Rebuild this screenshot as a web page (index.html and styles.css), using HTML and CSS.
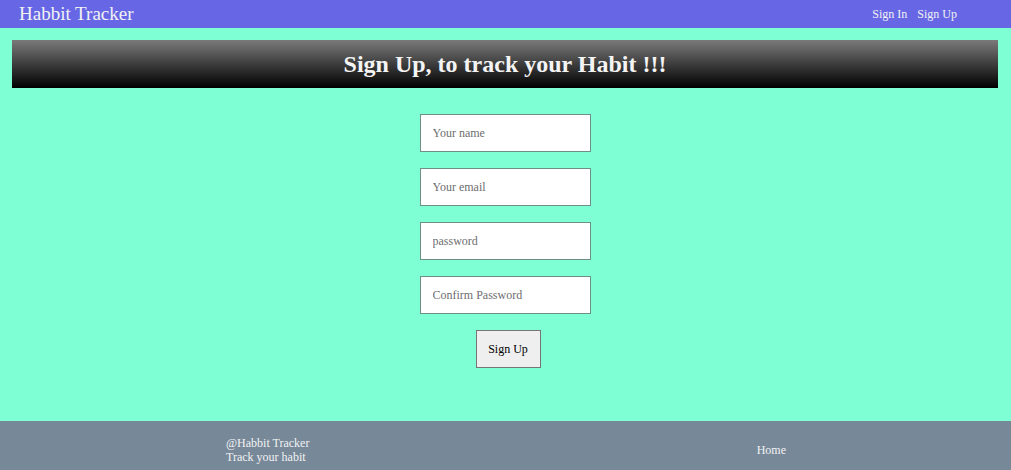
FILE: index.html
```html
<!DOCTYPE html>
<html>
<head>
<meta charset="utf-8">
<title>Habbit Tracker</title>
<link rel="stylesheet" href="styles.css">
</head>
<body>
<nav class="navbar">
  <a class="brand" href="#">Habbit Tracker</a>
  <div class="nav-links">
    <a href="#">Sign In</a>
    <a href="#">Sign Up</a>
  </div>
</nav>
<main class="main">
  <h1 class="banner">Sign Up, to track your Habit !!!</h1>
  <form class="form">
    <input class="field" type="text" placeholder="Your name">
    <input class="field" type="email" placeholder="Your email">
    <input class="field" type="password" placeholder="password">
    <input class="field" type="password" placeholder="Confirm Password">
    <button class="btn" type="button">Sign Up</button>
  </form>
</main>
<footer class="footer">
  <div class="foot-left">
    <div>@Habbit Tracker</div>
    <div>Track your habit</div>
  </div>
  <a class="foot-link" href="#">Home</a>
</footer>
</body>
</html>
```
FILE: styles.css
```css
html, body {
  margin: 0;
  padding: 0;
  height: 100%;
}
body {
  font-family: "Liberation Serif", "Times New Roman", serif;
  background: #7fffd4;
  display: flex;
  flex-direction: column;
}
a { text-decoration: none; color: #f2f2f2; }

.navbar {
  height: 28px;
  background: #6767e6;
  display: flex;
  align-items: center;
  justify-content: space-between;
  padding: 0 54px 0 19px;
}
.brand {
  font-size: 19px;
  line-height: 28px;
}
.nav-links {
  display: flex;
  gap: 10px;
  font-size: 12px;
}

.main {
  flex: 1;
  padding: 12px 13px 0 12px;
}
.banner {
  margin: 0;
  height: 48px;
  line-height: 48px;
  text-align: center;
  font-size: 24px;
  font-weight: bold;
  color: #f4f4f4;
  background: linear-gradient(to bottom, #7a7a7a, #000);
}
.form {
  display: flex;
  flex-direction: column;
  align-items: center;
  gap: 16px;
  margin-top: 26px;
}
.field {
  box-sizing: border-box;
  width: 171px;
  height: 38px;
  padding: 0 12px;
  border: 1px solid #6c8f88;
  background: #fff;
  font-family: "Liberation Serif", "Times New Roman", serif;
  font-size: 12px;
  outline: none;
}
.field::placeholder { color: #6e6e6e; }
.btn {
  box-sizing: border-box;
  width: 65px;
  height: 38px;
  margin-left: 6px;
  border: 1px solid #767676;
  background: #efefef;
  font-family: "Liberation Serif", "Times New Roman", serif;
  font-size: 12px;
  color: #000;
}

.footer {
  height: 49px;
  background: #778899;
  color: #f2f2f2;
  font-size: 12px;
  display: flex;
  align-items: center;
  justify-content: space-between;
  padding: 9px 225px 0 226px;
  box-sizing: border-box;
}
.foot-left { line-height: 14px; }
.foot-link { font-size: 12px; }
```
